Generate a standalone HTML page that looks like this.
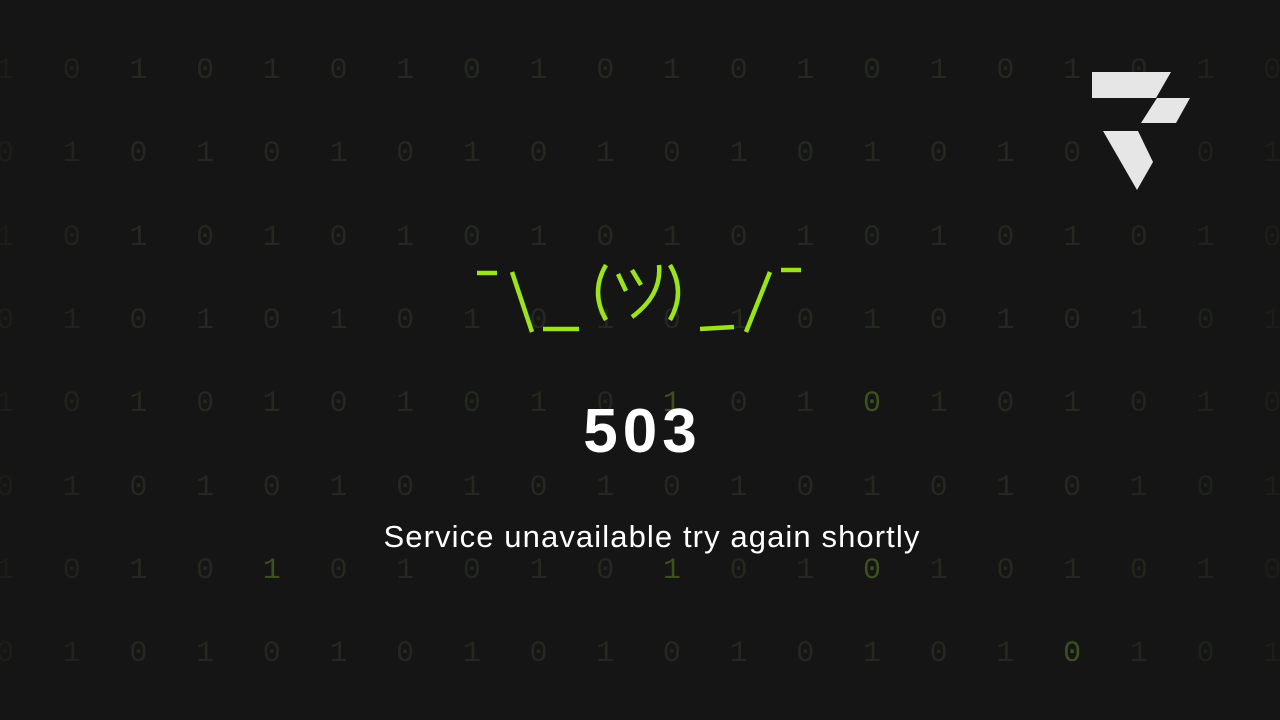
<!DOCTYPE html>
<html><head><meta charset="utf-8"><style>
html,body{margin:0;padding:0;width:1280px;height:720px;overflow:hidden;background:#151515;position:relative}
#bg{position:absolute;left:-4px;top:30px;height:690px;overflow:hidden;margin:0;font-family:"Liberation Mono",monospace;font-size:30px;line-height:83.33px;letter-spacing:-1.33px;color:#25281f;white-space:pre;
-webkit-mask-image:linear-gradient(90deg,rgba(0,0,0,.45) 0,#000 140px,#000 1100px,rgba(0,0,0,.45) 1280px);mask-image:linear-gradient(90deg,rgba(0,0,0,.45) 0,#000 140px,#000 1100px,rgba(0,0,0,.45) 1280px)}
.g{color:#3a5220}
.t{position:absolute;left:0;width:1280px;text-align:center;font-family:"Liberation Sans",sans-serif;color:#fff}
</style></head><body>
<pre id="bg">1   0   1   0   1   0   1   0   1   0   1   0   1   0   1   0   1   0   1   0
0   1   0   1   0   1   0   1   0   1   0   1   0   1   0   1   0   1   0   1
1   0   1   0   1   0   1   0   1   0   1   0   1   0   1   0   1   0   1   0
0   1   0   1   0   1   0   1   0   1   0   1   0   1   0   1   0   1   0   1
1   0   1   0   1   0   1   0   1   0   <span class="g">1</span>   0   1   <span class="g">0</span>   1   0   1   0   1   0
0   1   0   1   0   1   0   1   0   1   0   1   0   1   0   1   0   1   0   1
1   0   1   0   <span class="g">1</span>   0   1   0   1   0   <span class="g">1</span>   0   1   <span class="g">0</span>   1   0   1   0   1   0
0   1   0   1   0   1   0   1   0   1   0   1   0   1   0   1   <span class="g">0</span>   1   0   1</pre>
<svg style="position:absolute;left:0;top:0" width="1280" height="720">
<g fill="#e6e6e6">
<polygon points="1092,72 1171,72 1156,98 1092,98"/>
<polygon points="1157,98 1190,98 1176,123 1141,123"/>
<polygon points="1103,131 1138,131 1153,162 1137,190"/>
</g>
<g stroke="#9be31b" stroke-width="4.5" fill="none" stroke-linecap="butt">
<line x1="477" y1="273" x2="497" y2="273"/>
<line x1="512" y1="272" x2="532" y2="332"/>
<line x1="543" y1="329" x2="579" y2="329"/>
<path d="M606,265 Q590,292 606,320"/>
<line x1="618" y1="274" x2="626" y2="291"/>
<line x1="632" y1="270" x2="641" y2="285"/>
<path d="M659,265 Q662,295 632,317"/>
<path d="M670,265 Q686,292 670,320"/>
<line x1="700" y1="329" x2="734" y2="327"/>
<line x1="770" y1="272" x2="746" y2="332"/>
<line x1="781" y1="270" x2="801" y2="270"/>
</g>
</svg>
<div class="t" style="top:397px;font-size:62px;font-weight:bold;line-height:70px;letter-spacing:5px;text-indent:5px">503</div>
<div class="t" style="top:518px;left:12px;font-size:31px;line-height:38px;letter-spacing:1.1px">Service unavailable try again shortly</div>
</body></html>
